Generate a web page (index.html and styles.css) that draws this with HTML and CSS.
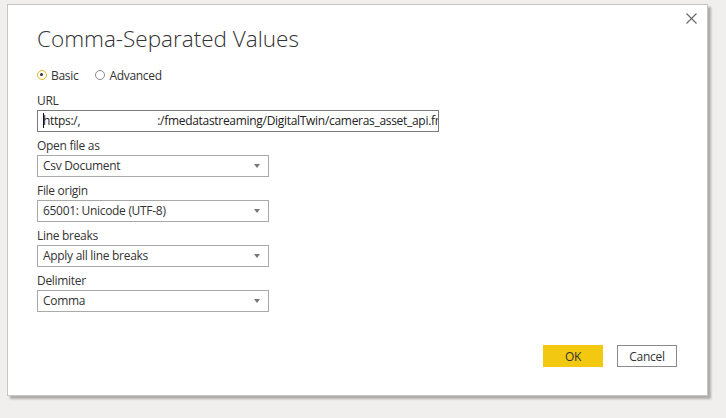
FILE: index.html
```html
<!DOCTYPE html>
<html>
<head>
<meta charset="utf-8">
<link rel="stylesheet" href="styles.css">
</head>
<body>
<div class="dialog">
  <button class="close" aria-label="Close">
    <svg width="11" height="11" viewBox="0 0 11 11"><path d="M0.5 0.5 L10.5 10.5 M10.5 0.5 L0.5 10.5" stroke="#666" stroke-width="1.1" fill="none"/></svg>
  </button>
  <h1 class="title">Comma-Separated Values</h1>
  <div class="radios">
    <label class="radio"><span class="dot on"></span>Basic</label>
    <label class="radio"><span class="dot"></span>Advanced</label>
  </div>
  <div class="field first">
    <div class="label">URL</div>
    <div class="input"><span class="caret"></span>https:/,<span class="gap"></span>:/fmedatastreaming/DigitalTwin/cameras_asset_api.fr</div>
  </div>
  <div class="field">
    <div class="label">Open file as</div>
    <div class="select"><span>Csv Document</span><span class="arrow"></span></div>
  </div>
  <div class="field">
    <div class="label">File origin</div>
    <div class="select"><span>65001: Unicode (UTF-8)</span><span class="arrow"></span></div>
  </div>
  <div class="field">
    <div class="label">Line breaks</div>
    <div class="select"><span>Apply all line breaks</span><span class="arrow"></span></div>
  </div>
  <div class="field">
    <div class="label">Delimiter</div>
    <div class="select"><span>Comma</span><span class="arrow"></span></div>
  </div>
  <div class="footer">
    <button class="btn ok">OK</button>
    <button class="btn cancel">Cancel</button>
  </div>
</div>
</body>
</html>
```
FILE: styles.css
```css
html, body {
  margin: 0;
  padding: 0;
  background: #f0efee;
  width: 726px;
  height: 418px;
  overflow: hidden;
}
body {
  font-family: "Open Sans", "Noto Sans", sans-serif;
  font-size: 12px;
  letter-spacing: -0.3px;
  color: #333;
}
.dialog {
  position: relative;
  box-sizing: border-box;
  margin: 4px 0 0 7px;
  width: 701px;
  height: 392px;
  background: #fff;
  border: 1px solid #c6c6c6;
  box-shadow: 3px 3px 2px rgba(0,0,0,0.28);
  padding: 19px 30px 0 29px;
}
.close {
  position: absolute;
  top: 8px;
  right: 10px;
  border: 0;
  background: none;
  padding: 0;
  width: 11px;
  height: 11px;
  display: block;
}
.close svg { display: block; }
.title {
  margin: 0;
  font-family: "Open Sans", sans-serif;
  font-weight: 300;
  font-size: 22.5px;
  line-height: 30px;
  color: #333;
  letter-spacing: 0;
}
.radios {
  display: flex;
  gap: 17px;
  margin-top: 13px;
  height: 16px;
  align-items: center;
}
.radio {
  display: flex;
  align-items: center;
  gap: 4px;
  font-size: 12px;
  color: #333;
}
.dot {
  box-sizing: border-box;
  width: 10px;
  height: 10px;
  border-radius: 50%;
  border: 1.5px solid #8a8a8a;
  display: inline-block;
  position: relative;
}
.dot.on {
  border-color: #e9b82a;
}
.dot.on::after {
  content: "";
  position: absolute;
  left: 2px;
  top: 2px;
  width: 3px;
  height: 3px;
  border-radius: 50%;
  background: #333;
}
.field {
  margin-top: 6px;
}
.field.first { margin-top: 10px; }
.label {
  height: 15px;
  line-height: 15px;
  margin-bottom: 2px;
  color: #333;
}
.input {
  box-sizing: border-box;
  width: 402px;
  height: 22px;
  border: 1px solid #7a7a7a;
  padding: 0 0 0 5px;
  line-height: 20px;
  white-space: nowrap;
  overflow: hidden;
  position: relative;
  color: #222;
}
.caret {
  display: inline-block;
  width: 1px;
  height: 15px;
  background: #111;
  vertical-align: -3px;
  margin-right: -1px;
}
.gap {
  display: inline-block;
  width: 77px;
}
.select {
  box-sizing: border-box;
  width: 232px;
  height: 22px;
  border: 1px solid #a9a9a9;
  padding: 0 8px 0 5px;
  line-height: 20px;
  display: flex;
  justify-content: space-between;
  align-items: center;
  color: #333;
}
.arrow {
  width: 0;
  height: 0;
  border-left: 3.5px solid transparent;
  border-right: 3.5px solid transparent;
  border-top: 4px solid #777;
}
.footer {
  display: flex;
  justify-content: flex-end;
  gap: 14px;
  margin-top: 33px;
}
.btn {
  box-sizing: border-box;
  width: 60px;
  height: 22px;
  font-family: "Open Sans", sans-serif;
  font-size: 12px;
  letter-spacing: -0.3px;
  color: #333;
  padding: 0;
}
.ok {
  background: #f2c811;
  border: 0;
}
.cancel {
  background: #fff;
  border: 1px solid #8a8a8a;
}
```
